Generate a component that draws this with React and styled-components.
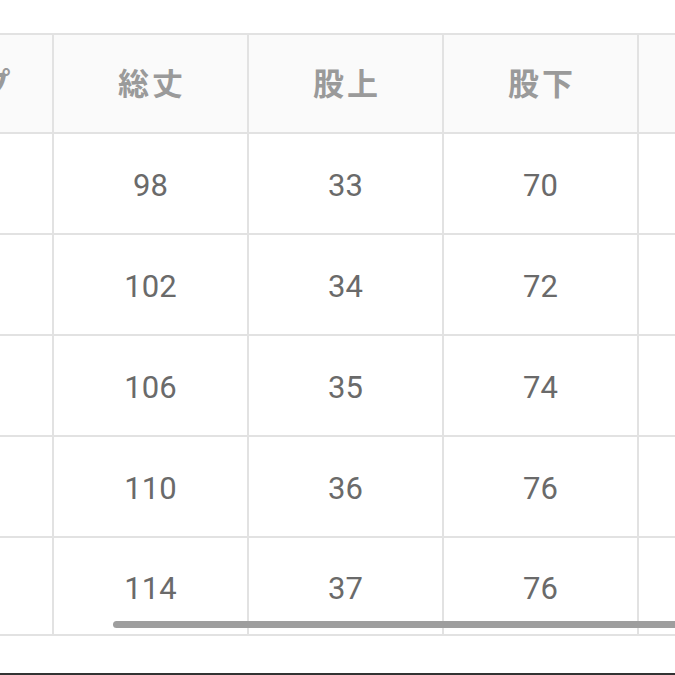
import React from "react";
import styled, { createGlobalStyle } from "styled-components";

const Global = createGlobalStyle`
  html, body { margin: 0; padding: 0; background: #ffffff; }
  body { font-family: Roboto, "Noto Sans CJK JP", sans-serif; }
`;

const Page = styled.div`
  width: 675px;
  height: 675px;
  display: flex;
  flex-direction: column;
  overflow: hidden;
  background: #ffffff;
`;

const ScrollArea = styled.div`
  position: relative;
  margin-top: 33px;
  width: 675px;
  overflow: hidden;
`;

const Table = styled.table`
  margin-left: -141px;
  border-collapse: separate;
  border-spacing: 0;
  table-layout: fixed;
  width: 1170px;
  border-top: 2px solid #e2e2e2;
`;

const HeadCell = styled.th`
  width: 195px;
  height: 99px;
  box-sizing: border-box;
  padding: 0 0 4px ${(p) => p.$padLeft || 3}px;
  background: #fafafa;
  border-right: 2px solid #e2e2e2;
  border-bottom: 2px solid #e2e2e2;
  color: #9a9a9a;
  font-family: "Noto Sans CJK JP", sans-serif;
  font-weight: 700;
  font-size: 31px;
  letter-spacing: 3px;
  text-align: center;
  white-space: nowrap;
`;

const Cell = styled.td`
  width: 195px;
  height: ${(p) => p.$h}px;
  box-sizing: border-box;
  padding: 4px 0 0;
  border-right: 2px solid #e2e2e2;
  border-bottom: 2px solid #e2e2e2;
  color: #6a6a6a;
  font-family: Roboto, sans-serif;
  font-size: 31px;
  text-align: center;
  vertical-align: middle;
`;

const ScrollThumb = styled.div`
  position: absolute;
  left: 113px;
  right: -10px;
  bottom: 8px;
  height: 7px;
  border-radius: 4px;
  background: #9e9e9e;
`;

const BottomBar = styled.div`
  margin-top: auto;
  height: 2px;
  background: #333333;
`;

const headers = ["ヒップ", "総丈", "股上", "股下", "裾幅", "ウエスト"];
const rows = [
  ["96", "98", "33", "70", "21", "—"],
  ["100", "102", "34", "72", "22", "—"],
  ["104", "106", "35", "74", "23", "—"],
  ["108", "110", "36", "76", "24", "—"],
  ["112", "114", "37", "76", "25", "—"],
];

export default function App() {
  return (
    <>
      <Global />
      <Page>
        <ScrollArea>
          <Table>
            <thead>
              <tr>
                {headers.map((h, i) => (
                  <HeadCell key={h} $padLeft={i === 0 ? 14 : 3}>
                    {h}
                  </HeadCell>
                ))}
              </tr>
            </thead>
            <tbody>
              {rows.map((r, i) => (
                <tr key={i}>
                  {r.map((v, j) => (
                    <Cell key={j} $h={i === rows.length - 1 ? 98 : 101}>
                      {v}
                    </Cell>
                  ))}
                </tr>
              ))}
            </tbody>
          </Table>
          <ScrollThumb />
        </ScrollArea>
        <BottomBar />
      </Page>
    </>
  );
}
